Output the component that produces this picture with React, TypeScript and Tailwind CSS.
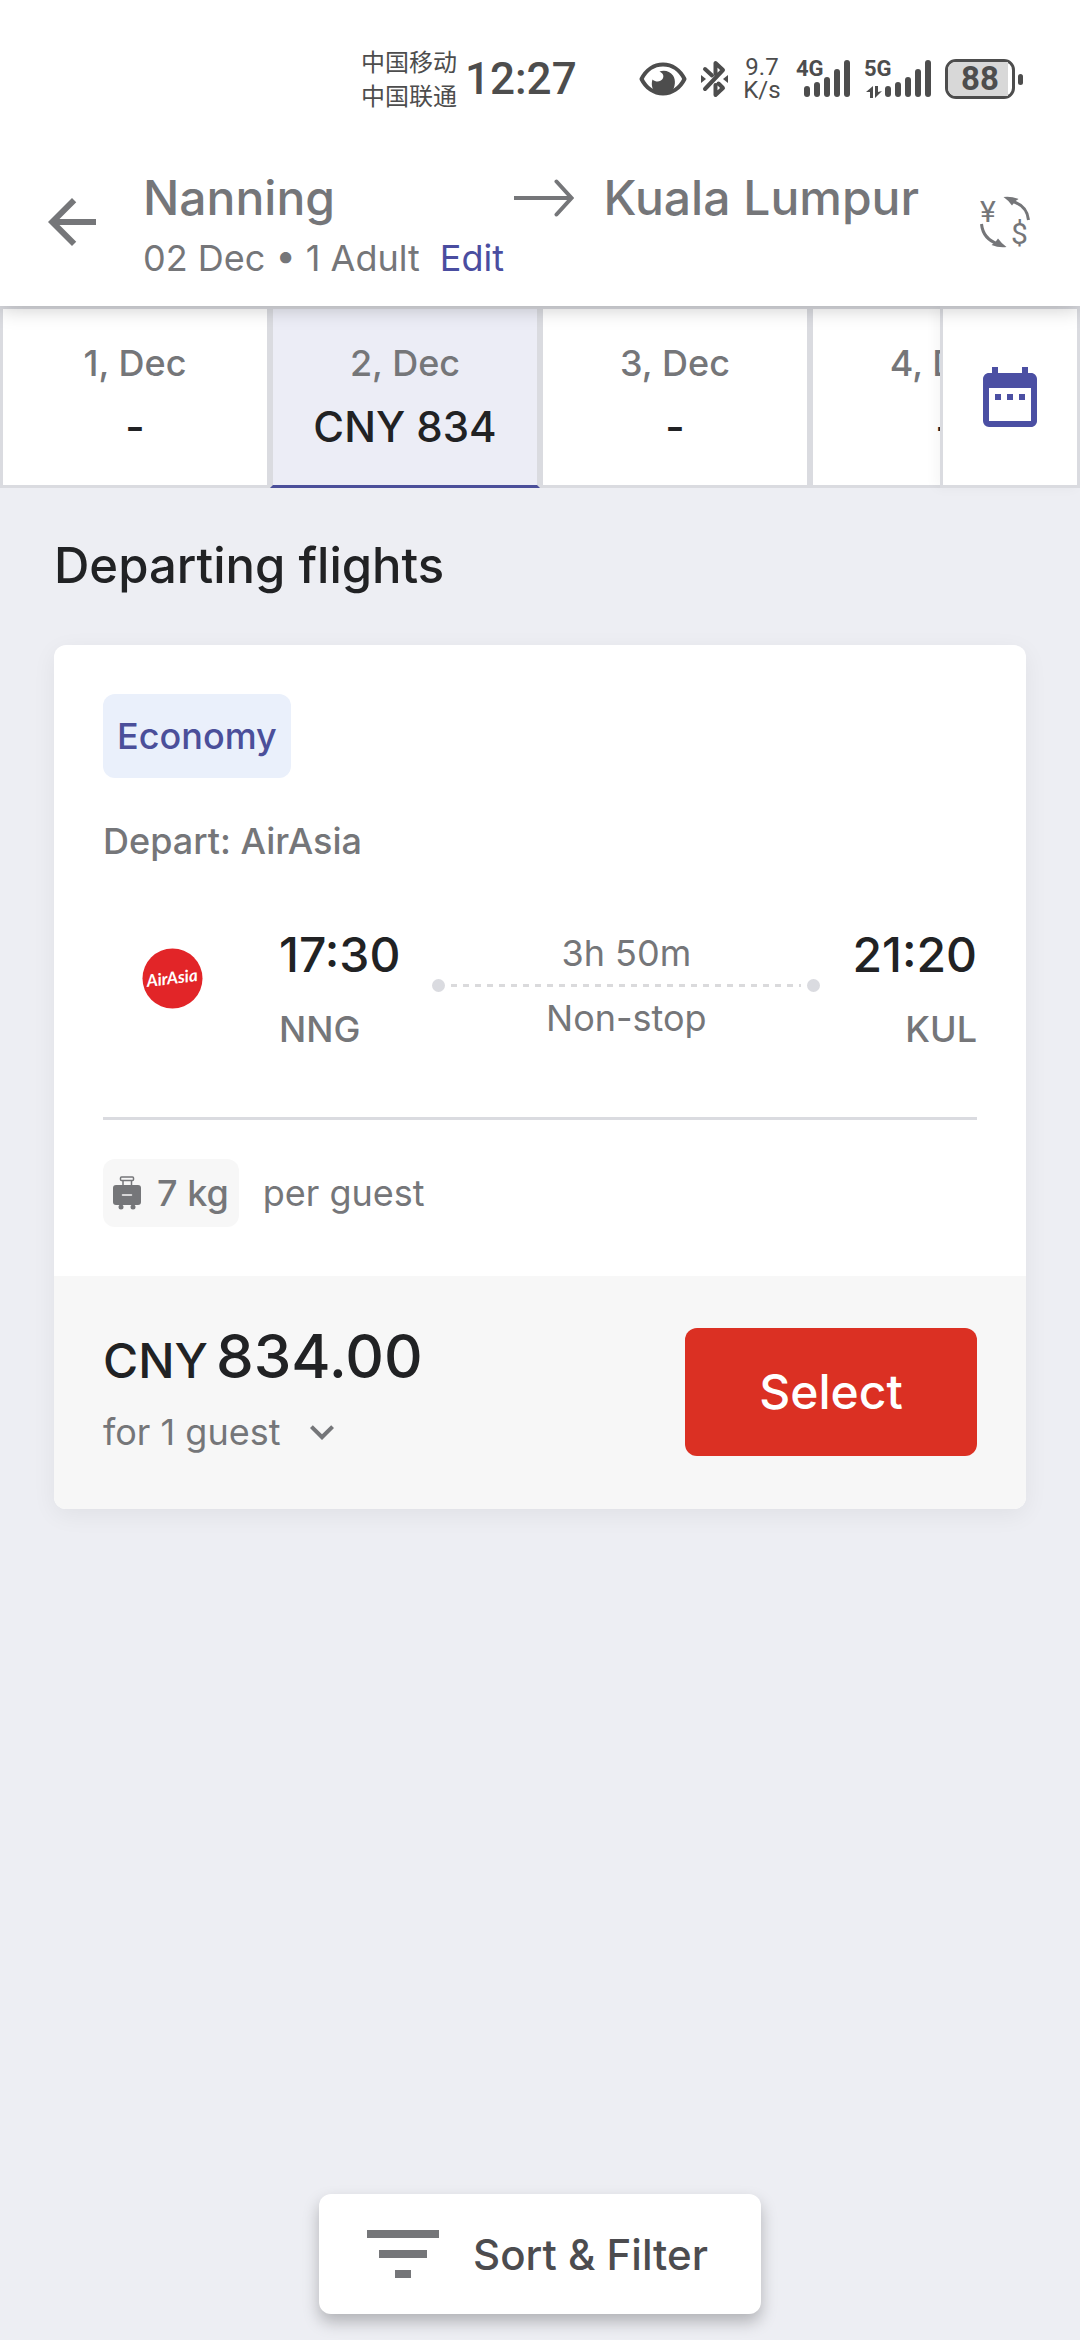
import React from "react";
import { MdArrowBack, MdDateRange, MdKeyboardArrowDown } from "react-icons/md";

const days = [
  { date: "1, Dec", price: "-" },
  { date: "2, Dec", price: "CNY 834", selected: true },
  { date: "3, Dec", price: "-" },
  { date: "4, Dec", price: "-" },
];

function EyeIcon() {
  return (
    <svg width="48" height="34" viewBox="0 0 48 34" className="shrink-0" aria-hidden="true">
      <path d="M2.5 17C7 8 15 2.5 24 2.5S41 8 45.500 17C41 26 33 31.500 24 31.500S7 26 2.500 17Z" fill="none" stroke="currentColor" strokeWidth="4" strokeLinejoin="round" />
      <path d="M20.500 9.500C25 7.500 31 9 34 13.500C37 18 36.500 25 32.500 30C27 33 20 33 16 30C13 27 12 22 13.500 17.500C17 20.500 21.500 20 23.500 17C25.500 14 24 11 20.500 9.500Z" fill="currentColor" />
    </svg>
  );
}

function BluetoothIcon() {
  return (
    <svg width="27" height="38" viewBox="0 0 27 38" className="shrink-0" aria-hidden="true">
      <g fill="none" stroke="currentColor" strokeWidth="4" strokeLinecap="round" strokeLinejoin="round">
        <path d="M4 9L11 15.500" />
        <path d="M4 29L22 10L14.500 3V14" />
        <path d="M14.500 25V35L22 28L17.500 23.500" />
      </g>
      <path d="M0 15L5 19L0 23ZM27 15L22 19L27 23Z" fill="currentColor" />
    </svg>
  );
}

function SignalBars() {
  return (
    <svg width="46" height="38" viewBox="0 0 46 38" className="ml-auto" fill="currentColor" aria-hidden="true">
      <rect x="0" y="26" width="6" height="11" rx="3" />
      <rect x="10" y="22" width="6" height="15" rx="3" />
      <rect x="20" y="17" width="6" height="20" rx="3" />
      <rect x="30" y="9" width="6" height="28" rx="3" />
      <rect x="40" y="0" width="6" height="37" rx="3" />
    </svg>
  );
}

function StatusBar() {
  return (
    <div className="relative z-20 flex h-[156px] items-center justify-between bg-white pr-[57px] pl-[361px] text-[#4d4d4d]">
      <div className="flex items-center gap-2">
        <div className="font-['Noto_Sans_CJK_SC',sans-serif] text-2xl leading-[34px] whitespace-nowrap">
          <p>中国移动</p>
          <p>中国联通</p>
        </div>
        <p className="pt-0.5 font-[Roboto,sans-serif] text-[44px] leading-[54px] font-medium">12:27</p>
      </div>
      <div className="flex items-center gap-[14px] pt-0.5 font-[Roboto,sans-serif]">
        <EyeIcon />
        <BluetoothIcon />
        <div className="w-10 text-center text-2xl leading-[23px]">
          <p>9.7</p>
          <p>K/s</p>
        </div>
        <div className="relative w-[54px]">
          <span className="absolute -top-px left-0 text-[22px] leading-5 font-bold">4G</span>
          <SignalBars />
        </div>
        <div className="relative w-[67px]">
          <span className="absolute -top-px left-0 text-[22px] leading-5 font-bold">5G</span>
          <svg width="16" height="12" viewBox="0 0 16 12" className="absolute bottom-0 left-0.5" fill="currentColor" aria-hidden="true">
            <path d="M7 0V12H4V6H0ZM9 0H12V6L16 5L9 12Z" />
          </svg>
          <SignalBars />
        </div>
        <div className="flex items-center gap-[3px]">
          <div className="flex h-10 w-[70px] rounded-[11px] border-3 border-current">
            <div className="flex w-[60px] items-center justify-center rounded-l-lg bg-[#d8d8d8] pl-1">
              <span className="text-[33px] leading-8 font-bold">88</span>
            </div>
          </div>
          <div className="h-[11px] w-[5px] rounded-sm bg-current" />
        </div>
      </div>
    </div>
  );
}

function CurrencyIcon() {
  return (
    <svg width="50" height="52" viewBox="0 0 50 52" fill="none" aria-hidden="true">
      <path d="M31 5Q47 9 48.500 24" stroke="currentColor" strokeWidth="3" />
      <path d="M23.500 1Q31 0 38.500 3L35 5.500L32 9.500Q28 4 23.500 1Z" fill="currentColor" />
      <path d="M1.500 28Q3 43 18 48" stroke="currentColor" strokeWidth="3" />
      <path d="M26.500 51Q19 52 11.500 49L15 46.500L18 42.500Q22 48 26.500 51Z" fill="currentColor" />
      <text x="0" y="26" fontSize="30" fontFamily="Roboto, sans-serif" fill="currentColor">¥</text>
      <text x="31" y="48" fontSize="30" fontFamily="Roboto, sans-serif" fill="currentColor">$</text>
    </svg>
  );
}

function Header() {
  return (
    <header className="relative z-10 flex bg-white pt-3 pr-[50px] pb-6 pl-9 text-[#757679] shadow-[0_2px_20px_rgba(0,0,0,0.22)]">
      <button type="button" aria-label="Back" className="flex h-27 shrink-0 items-center">
        <MdArrowBack size={72} />
      </button>
      <div className="ml-[35px] flex flex-1 flex-col gap-1.5">
        <h1 className="flex items-center text-5xl leading-[60px] font-medium whitespace-nowrap">
          <span className="flex-1">Nanning</span>
          <svg width="60" height="38" viewBox="0 0 60 38" className="mx-[30px] shrink-0" fill="none" stroke="currentColor" strokeWidth="4" role="img" aria-label="to">
            <path d="M0 19H58" />
            <path d="M42.500 2.500L57.500 19L42.500 35.500" strokeLinecap="round" />
          </svg>
          <span>Kuala Lumpur</span>
        </h1>
        <div className="flex gap-5 text-4xl leading-12">
          <p>02 Dec • 1 Adult</p>
          <a href="#edit" className="text-[#4a4da0]">Edit</a>
        </div>
      </div>
      <button type="button" aria-label="Change currency" className="ml-[61px] flex h-27 shrink-0 items-center">
        <CurrencyIcon />
      </button>
    </header>
  );
}

function DateStrip() {
  return (
    <nav aria-label="Travel dates" className="flex">
      <div className="flex min-w-0 flex-1 overflow-hidden">
        {days.map((d) => (
          <button
            key={d.date}
            type="button"
            aria-pressed={!!d.selected}
            className={`flex w-[270px] shrink-0 flex-col items-center gap-3 border-3 border-[#dadbe0] py-[30px] font-medium ${d.selected ? "border-b-[#4b4f9a] bg-[#ecedf6]" : "bg-white"}`}
          >
            <span className="text-4xl leading-12 text-[#757679]">{d.date}</span>
            <span className="text-[42px] leading-14 text-[#212224]">{d.price}</span>
          </button>
        ))}
      </div>
      <button type="button" aria-label="Open calendar" className="relative flex w-[140px] shrink-0 items-center justify-center border-3 border-[#dadbe0] bg-white text-[#4b4fa3] shadow-[-4px_0_12px_rgba(0,0,0,0.04)]">
        <MdDateRange size={72} />
      </button>
    </nav>
  );
}

function AirAsiaLogo() {
  return (
    <svg width="61" height="61" viewBox="0 0 61 61" role="img" aria-label="AirAsia">
      <circle cx="30.500" cy="30.500" r="30" fill="#e22528" />
      <text x="30" y="36" textAnchor="middle" transform="rotate(-7 30 30)" fontFamily="Lato, sans-serif" fontStyle="italic" fontWeight="700" fontSize="17" fill="#fff">AirAsia</text>
    </svg>
  );
}

function SuitcaseIcon() {
  return (
    <svg width="28" height="34" viewBox="0 0 28 34" className="shrink-0" fill="none" aria-hidden="true">
      <rect x="7.500" y="1" width="13" height="3.500" rx="1" stroke="currentColor" strokeWidth="1.500" />
      <path d="M10 5V10M18.500 5V10" stroke="currentColor" strokeWidth="1.500" />
      <rect x="0" y="9" width="28" height="20" rx="3" fill="currentColor" />
      <path d="M9.500 19H18.500" stroke="#f7f7f7" strokeWidth="1.500" strokeLinecap="round" />
      <circle cx="8" cy="31" r="2.500" fill="currentColor" />
      <circle cx="20" cy="31" r="2.500" fill="currentColor" />
    </svg>
  );
}

function FlightCard() {
  return (
    <article className="overflow-hidden rounded-xl bg-white text-4xl leading-12 text-[#757679] shadow-[0_6px_24px_rgba(0,0,0,0.06)]">
      <div className="px-[49px] pt-[49px] pb-[49px]">
        <span className="inline-flex rounded-xl bg-[#eaf0fb] px-[14px] py-[18px] font-medium text-[#4b4f9a]">Economy</span>
        <p className="mt-[39px] font-medium">Depart: AirAsia</p>

        <div className="mt-[60px] flex items-start">
          <div className="flex h-[106px] w-[138px] shrink-0 items-center justify-center">
            <AirAsiaLogo />
          </div>
          <div className="ml-[38px] flex flex-col gap-5 font-medium">
            <span className="text-5xl leading-[60px] text-[#212224]">17:30</span>
            <span>NNG</span>
          </div>
          <div className="mt-1 mr-8 ml-8 flex flex-1 flex-col text-center">
            <span>3h 50m</span>
            <div className="my-0.5 flex items-center gap-1.5">
              <span className="size-[13px] rounded-full bg-[#dadbe0]" />
              <span className="h-[3px] flex-1 bg-[repeating-linear-gradient(90deg,#dadadc_0_6px,transparent_6px_12px)]" />
              <span className="size-[13px] rounded-full bg-[#dadbe0]" />
            </div>
            <span>Non-stop</span>
          </div>
          <div className="flex flex-col items-end gap-5 font-medium">
            <span className="text-5xl leading-[60px] text-[#212224]">21:20</span>
            <span>KUL</span>
          </div>
        </div>

        <hr className="mt-16 border-t-3 border-[#dadbe0]" />

        <div className="mt-[39px] flex items-center gap-6">
          <span className="flex items-center gap-4 rounded-xl bg-[#f7f7f7] px-2.5 py-2.5 font-medium">
            <SuitcaseIcon />
            7 kg
          </span>
          <span>per guest</span>
        </div>
      </div>

      <div className="flex items-end justify-between bg-[#f7f7f7] px-[49px] pt-11 pb-[53px]">
        <div className="flex flex-col gap-4">
          <p className="h-18 text-5xl leading-18 font-medium text-[#212224]">
            CNY<span className="ml-2 text-6xl leading-18">834.00</span>
          </p>
          <button type="button" className="flex items-center gap-[18px]">
            for 1 guest
            <MdKeyboardArrowDown size={48} />
          </button>
        </div>
        <button type="button" className="h-32 w-[292px] rounded-xl bg-[#db3023] text-5xl font-medium text-white">
          Select
        </button>
      </div>
    </article>
  );
}

export default function App() {
  return (
    <div className="flex min-h-screen flex-col bg-[#edeef3] font-[Inter,sans-serif]">
      <StatusBar />
      <Header />
      <DateStrip />
      <main className="flex-1 px-[54px] pt-12">
        <h2 className="mb-[49px] text-[49px] leading-[60px] font-medium text-[#212224]">Departing flights</h2>
        <FlightCard />
      </main>
      <button type="button" className="sticky bottom-[26px] mx-auto mb-[26px] flex h-30 w-[442px] items-center gap-[34px] rounded-xl bg-white pl-12 text-[42px] font-medium whitespace-nowrap text-[#4c4c4f] shadow-[0_8px_16px_rgba(0,0,0,0.25)]">
        <svg width="72" height="48" viewBox="0 0 72 48" className="shrink-0" fill="#757679" aria-hidden="true">
          <path d="M0 0H72V8H0ZM12 20H60V28H12ZM28 40H44V48H28Z" />
        </svg>
        Sort &amp; Filter
      </button>
    </div>
  );
}
